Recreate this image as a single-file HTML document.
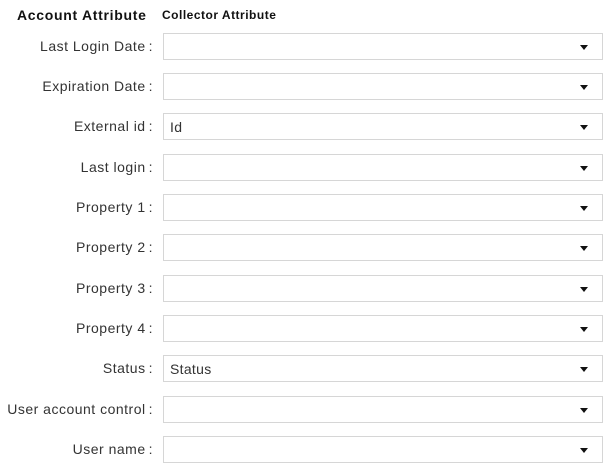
<!DOCTYPE html>
<html><head><style>
body{margin:0;width:610px;height:470px;background:#fff;font-family:"Liberation Sans",sans-serif;color:#333;position:relative;overflow:hidden}
.h{position:absolute;top:7px;font-weight:bold;color:#111}
.lab{position:absolute;right:457px;font-size:14px;line-height:27px;white-space:nowrap;letter-spacing:0.5px}
.lab span{margin-left:3px}
.box{position:absolute;left:163px;width:438px;height:25px;border:1px solid #d6d6d6;background:#fff;font-size:14px;line-height:27px;text-indent:6px;letter-spacing:0.3px}
.box:after{content:"";position:absolute;right:14px;top:11px;border-left:4px solid transparent;border-right:4px solid transparent;border-top:5px solid #111}
</style></head><body>
<div class="h" style="left:17px;font-size:14px;letter-spacing:0.7px">Account Attribute</div>
<div class="h" style="left:162px;font-size:12px;top:8px;letter-spacing:0.5px">Collector Attribute</div>

<div class="lab" style="top:33px">Last Login Date<span>:</span></div><div class="box" style="top:33px"></div>
<div class="lab" style="top:73px">Expiration Date<span>:</span></div><div class="box" style="top:73px"></div>
<div class="lab" style="top:113px">External id<span>:</span></div><div class="box" style="top:113px">Id</div>
<div class="lab" style="top:154px">Last login<span>:</span></div><div class="box" style="top:154px"></div>
<div class="lab" style="top:194px">Property 1<span>:</span></div><div class="box" style="top:194px"></div>
<div class="lab" style="top:234px">Property 2<span>:</span></div><div class="box" style="top:234px"></div>
<div class="lab" style="top:275px">Property 3<span>:</span></div><div class="box" style="top:275px"></div>
<div class="lab" style="top:315px">Property 4<span>:</span></div><div class="box" style="top:315px"></div>
<div class="lab" style="top:355px">Status<span>:</span></div><div class="box" style="top:355px">Status</div>
<div class="lab" style="top:396px">User account control<span>:</span></div><div class="box" style="top:396px"></div>
<div class="lab" style="top:436px">User name<span>:</span></div><div class="box" style="top:436px"></div>
</body></html>
